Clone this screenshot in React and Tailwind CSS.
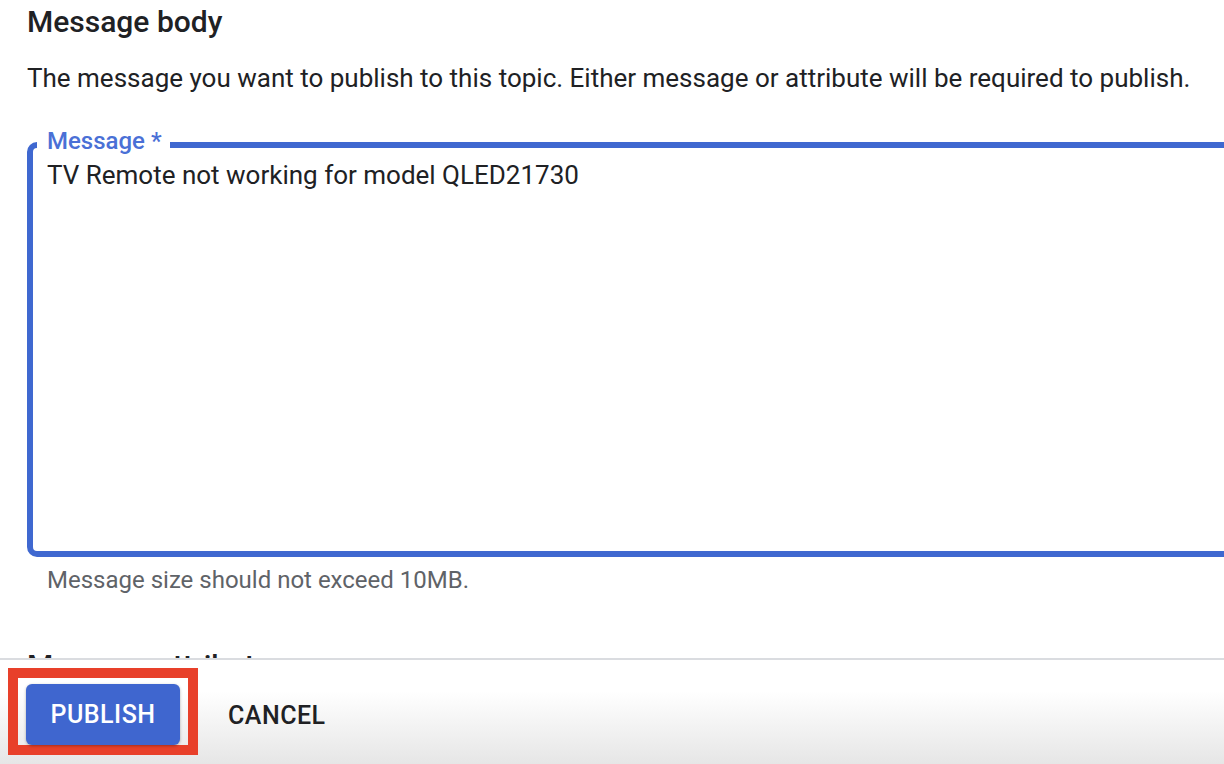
export default function App() {
  return (
    <div className="relative flex h-[764px] w-[1224px] flex-col overflow-hidden bg-white font-['Roboto',sans-serif] text-[#202124]">
      <main className="min-h-0 flex-1 overflow-hidden pl-[27px]">
        <h2 className="pt-[2px] text-[30px] font-medium leading-[40px] text-[#202124]">Message body</h2>
        <p className="mt-[16px] whitespace-nowrap text-[26px] leading-[40px] text-[#202124]">
          The message you want to publish to this topic. Either message or attribute will be required to publish.
        </p>
        <div className="relative mt-[44px] h-[415px] w-[1230px] rounded-[10px] border-[6px] border-[#3f68d0]">
          <span className="absolute left-[4px] top-[-19px] bg-white pl-[10px] pr-[8px] text-[24px] font-medium leading-[24px] text-[#4a70d6]">
            Message *
          </span>
          <div className="pl-[14px] pt-[9px] text-[26px] leading-[36px] text-[#202124]">
            TV Remote not working for model QLED21730
          </div>
        </div>
        <p className="ml-[20px] mt-[7px] text-[24px] leading-[32px] text-[#5f6368]">
          Message size should not exceed 10MB.
        </p>
        <h2 className="mt-[50px] text-[30px] font-medium leading-[40px] text-[#202124]">Message attributes</h2>
      </main>
      <footer className="flex h-[106px] shrink-0 items-start border-t-2 border-[#dadce0] bg-gradient-to-b from-white from-30% to-[#e6e6e6] pl-[8px] pt-[8px]">
        <div className="border-[10px] border-[#e8402a] px-[8px] pt-[6px]">
          <button className="flex h-[61px] w-[154px] items-center justify-center rounded-[6px] bg-[#3f66cf] text-[25px] font-medium tracking-[0.5px] text-white shadow-[0_1px_3px_rgba(0,0,0,0.3)]">
            PUBLISH
          </button>
        </div>
        <button className="ml-[30px] mt-[30px] text-[25px] font-medium leading-[36px] tracking-[0.5px] text-[#202124]">
          CANCEL
        </button>
      </footer>
    </div>
  );
}
